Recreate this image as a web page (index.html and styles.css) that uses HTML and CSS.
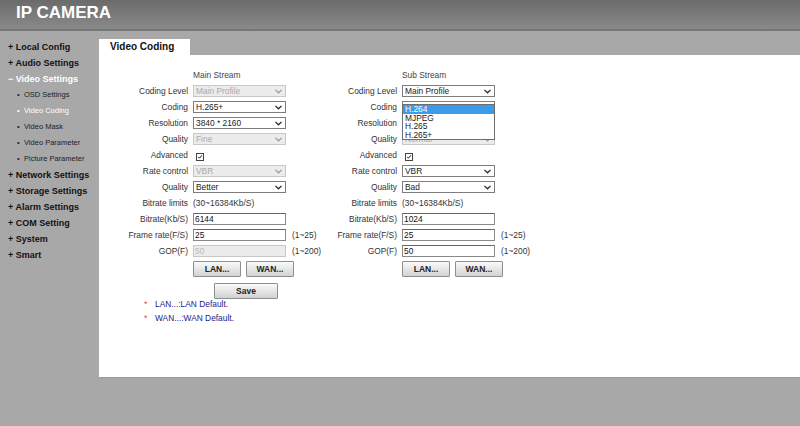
FILE: index.html
```html
<!DOCTYPE html>
<html lang="en">
<head>
    <meta charset="UTF-8">
    <title>IP CAMERA - Video Coding</title>
    <link rel="stylesheet" href="styles.css">
</head>
<body>

    <div class="top">
        <h1>IP CAMERA</h1>
    </div>

    <div class="page">
        <ul class="menu">
            <li class="group">+ Local Config</li>
            <li class="group">+ Audio Settings</li>
            <li class="group open">&minus; Video Settings</li>
            <li class="item">OSD Settings</li>
            <li class="item active">Video Coding</li>
            <li class="item">Video Mask</li>
            <li class="item">Video Parameter</li>
            <li class="item">Picture Parameter</li>
            <li class="group">+ Network Settings</li>
            <li class="group">+ Storage Settings</li>
            <li class="group">+ Alarm Settings</li>
            <li class="group">+ COM Setting</li>
            <li class="group">+ System</li>
            <li class="group">+ Smart</li>
        </ul>

        <div class="main">
            <div class="tab">Video Coding</div>
            <div class="panel">
                <div class="streams">
                    <!-- main stream -->
                    <div class="stream">
                        <div class="title">Main Stream</div>

                        <label>Coding Level</label>
                        <div class="sel off"><span>Main Profile</span><svg viewBox="0 0 8 5"><path d="M0.5 0.7 L4 4 L7.5 0.7"/></svg></div>

                        <label>Coding</label>
                        <div class="sel"><span>H.265+</span><svg viewBox="0 0 8 5"><path d="M0.5 0.7 L4 4 L7.5 0.7"/></svg></div>

                        <label>Resolution</label>
                        <div class="sel"><span>3840 * 2160</span><svg viewBox="0 0 8 5"><path d="M0.5 0.7 L4 4 L7.5 0.7"/></svg></div>

                        <label>Quality</label>
                        <div class="sel off"><span>Fine</span><svg viewBox="0 0 8 5"><path d="M0.5 0.7 L4 4 L7.5 0.7"/></svg></div>

                        <label>Advanced</label>
                        <div class="check"><svg viewBox="0 0 8 8"><path d="M1.6 3.8 L3.3 5.6 L6.4 1.8"/></svg></div>

                        <label>Rate control</label>
                        <div class="sel off"><span>VBR</span><svg viewBox="0 0 8 5"><path d="M0.5 0.7 L4 4 L7.5 0.7"/></svg></div>

                        <label>Quality</label>
                        <div class="sel"><span>Better</span><svg viewBox="0 0 8 5"><path d="M0.5 0.7 L4 4 L7.5 0.7"/></svg></div>

                        <label>Bitrate limits</label>
                        <div class="txt">(30~16384Kb/S)</div>

                        <label>Bitrate(Kb/S)</label>
                        <input class="field" type="text" value="6144">

                        <label>Frame rate(F/S)</label>
                        <input class="field" type="text" value="25">
                        <div class="hint">(1~25)</div>

                        <label>GOP(F)</label>
                        <input class="field" type="text" value="50" disabled>
                        <div class="hint">(1~200)</div>

                        <div class="btns">
                            <button type="button">LAN...</button>
                            <button type="button">WAN...</button>
                        </div>
                    </div>

                    <!-- sub stream -->
                    <div class="stream">
                        <div class="title">Sub Stream</div>

                        <label>Coding Level</label>
                        <div class="sel"><span>Main Profile</span><svg viewBox="0 0 8 5"><path d="M0.5 0.7 L4 4 L7.5 0.7"/></svg></div>

                        <label>Coding</label>
                        <div class="sel drop">
                            <span></span>
                            <ul class="list">
                                <li class="picked">H.264</li>
                                <li>MJPEG</li>
                                <li>H.265</li>
                                <li>H.265+</li>
                            </ul>
                        </div>

                        <label>Resolution</label>
                        <div class="sel"><span></span></div>

                        <label>Quality</label>
                        <div class="sel off"><span>Normal</span><svg viewBox="0 0 8 5"><path d="M0.5 0.7 L4 4 L7.5 0.7"/></svg></div>

                        <label>Advanced</label>
                        <div class="check"><svg viewBox="0 0 8 8"><path d="M1.6 3.8 L3.3 5.6 L6.4 1.8"/></svg></div>

                        <label>Rate control</label>
                        <div class="sel"><span>VBR</span><svg viewBox="0 0 8 5"><path d="M0.5 0.7 L4 4 L7.5 0.7"/></svg></div>

                        <label>Quality</label>
                        <div class="sel"><span>Bad</span><svg viewBox="0 0 8 5"><path d="M0.5 0.7 L4 4 L7.5 0.7"/></svg></div>

                        <label>Bitrate limits</label>
                        <div class="txt">(30~16384Kb/S)</div>

                        <label>Bitrate(Kb/S)</label>
                        <input class="field" type="text" value="1024">

                        <label>Frame rate(F/S)</label>
                        <input class="field" type="text" value="25">
                        <div class="hint">(1~25)</div>

                        <label>GOP(F)</label>
                        <input class="field" type="text" value="50">
                        <div class="hint">(1~200)</div>

                        <div class="btns">
                            <button type="button">LAN...</button>
                            <button type="button">WAN...</button>
                        </div>
                    </div>
                </div>

                <button type="button" class="save">Save</button>

                <ul class="notes">
                    <li><span class="star">*</span>LAN...:LAN Default.</li>
                    <li><span class="star">*</span>WAN...:WAN Default.</li>
                </ul>
            </div>
        </div>
    </div>

</body>
</html>
```

FILE: styles.css
```css
body {
    margin: 0;
    background-color: #a8a8a8;
    font-family: "Liberation Sans", Arial, sans-serif;
    color: #333;
}

.top {
    height: 29px;
    background: linear-gradient(#6b6b6b, #8a8a8a);
    border-bottom: 2px solid #777;
}

.top h1 {
    margin: 0;
    padding: 3px 0 0 16px;
    font-size: 17px;
    line-height: 20px;
    color: #fff;
}

.page {
    display: flex;
}

/* left menu */
.menu {
    width: 99px;
    margin: 0;
    padding: 8px 0 0 8px;
    box-sizing: border-box;
    list-style: none;
    flex-shrink: 0;
}

.menu li {
    height: 16px;
    line-height: 16px;
    white-space: nowrap;
}

.group {
    font-size: 9px;
    font-weight: bold;
    color: #111;
}

.group.open {
    color: #fff;
}

.item {
    font-size: 7.5px;
    color: #222;
    padding-left: 9px;
}

.item::before {
    content: "\2022";
    display: inline-block;
    width: 7px;
}

.item.active {
    color: #fff;
}

/* content */
.main {
    flex: 1;
    padding-top: 8px;
}

.tab {
    width: 91px;
    height: 16px;
    padding-left: 11px;
    box-sizing: border-box;
    background-color: #fff;
    font-size: 10px;
    font-weight: bold;
    line-height: 16px;
    color: #111;
}

.panel {
    height: 322px;
    background-color: #fff;
    border-bottom: 1px solid #999;
    font-size: 8.4px;
}

.streams {
    display: flex;
    padding-top: 12px;
}

.stream {
    width: 209px;
    display: grid;
    grid-template-columns: 89px 93px auto;
    grid-auto-rows: 16px;
    column-gap: 5px;
    align-items: center;
}

.stream label {
    grid-column: 1;
    text-align: right;
    white-space: nowrap;
}

.title {
    grid-column: 2;
    color: #444;
}

.sel, .field, .txt, .check {
    grid-column: 2;
}

.hint {
    grid-column: 3;
    padding-left: 1px;
    white-space: nowrap;
}

.sel {
    position: relative;
    height: 12px;
    border: 1px solid #7d7d7d;
    box-sizing: border-box;
    display: flex;
    align-items: center;
    justify-content: space-between;
    padding: 0 3px 0 2px;
    color: #222;
    line-height: 10px;
}

.sel svg {
    width: 7px;
    height: 5px;
    fill: none;
    stroke: #222;
    stroke-width: 1.4;
}

.sel.off {
    background-color: #ececec;
    border-color: #c8c8c8;
    color: #aaa;
}

.sel.off svg {
    stroke: #999;
}

.list {
    position: absolute;
    top: 2px;
    left: -1px;
    width: 93px;
    margin: 0;
    padding: 0;
    list-style: none;
    background-color: #fff;
    border: 1px solid #6e6e6e;
    box-sizing: border-box;
    z-index: 2;
}

.list li {
    height: 8.4px;
    line-height: 8.4px;
    padding-left: 2px;
    color: #222;
}

.list li.picked {
    height: 9px;
    background-color: #3d9be9;
    color: #fff;
}

.check {
    width: 8px;
    height: 8px;
    margin: 3px 0 0 3px;
    border: 1px solid #444;
    box-sizing: border-box;
}

.check svg {
    display: block;
    width: 6px;
    height: 6px;
    fill: none;
    stroke: #111;
    stroke-width: 1.3;
}

.txt {
    white-space: nowrap;
}

.field {
    width: 93px;
    height: 12px;
    margin: 0;
    padding: 0 1px;
    box-sizing: border-box;
    border: 1px solid #8a8a8a;
    border-top-color: #666;
    font-family: "Liberation Sans", Arial, sans-serif;
    font-size: 8.4px;
    color: #111;
    background-color: #fff;
}

.field:disabled {
    background-color: #ececec;
    border-color: #c8c8c8;
    color: #bbb;
}

.btns {
    grid-column: 2 / span 2;
    align-self: start;
    display: flex;
    gap: 5px;
    margin-top: 2px;
}

button {
    height: 16px;
    padding: 0;
    border: 1px solid #8e8e8e;
    border-radius: 1px;
    background: linear-gradient(#fafafa, #d2d2d2);
    font-family: "Liberation Sans", Arial, sans-serif;
    font-size: 8.5px;
    font-weight: bold;
    color: #222;
}

.btns button {
    width: 48px;
}

.save {
    display: block;
    width: 64px;
    margin: 8px 0 0 115px;
}

.notes {
    list-style: none;
    margin: -2px 0 0 45px;
    padding: 0;
    line-height: 14px;
    color: #23238a;
}

.star {
    display: inline-block;
    width: 11px;
    color: #e23a3a;
}
```
